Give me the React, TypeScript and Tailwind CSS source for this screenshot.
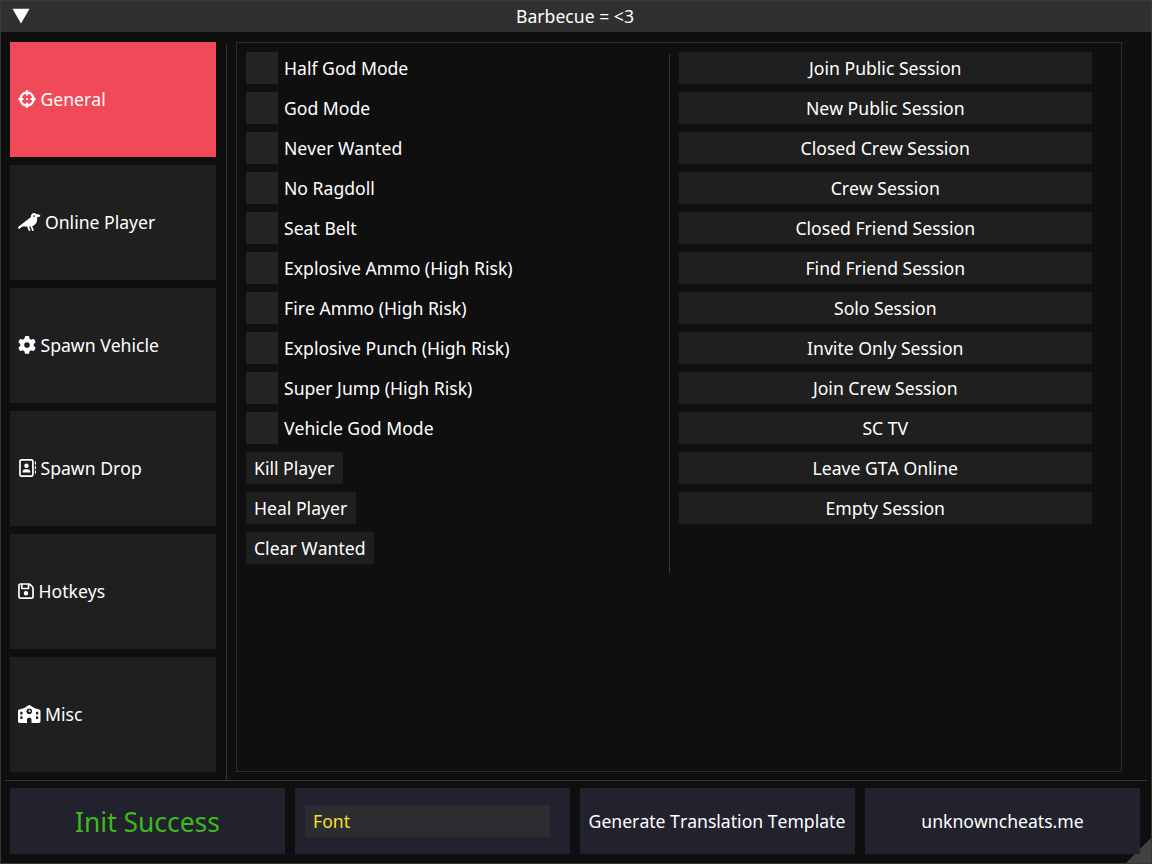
import type { ReactNode } from 'react';
import {
  FaCrosshairs,
  FaCrow,
  FaGear,
  FaRegAddressBook,
  FaRegFloppyDisk,
} from 'react-icons/fa6';

function SchoolIcon() {
  return (
    <svg
      className="h-[18px] w-[22.5px]"
      viewBox="0 0 640 512"
      fill="currentColor"
      fillRule="evenodd"
    >
      <path d="M302 5.400C313-1.800 327-1.800 338 5.400L474 92L605 129C626 135 640 154 640 176V464C640 490.500 618.500 512 592 512H384V416C384 380.700 355.300 352 320 352S256 380.700 256 416V512H48C21.500 512 0 490.500 0 464V176C0 154 14 135 35 129L166 92ZM80 192C71.200 192 64 199.200 64 208V256C64 264.800 71.200 272 80 272H112C120.800 272 128 264.800 128 256V208C128 199.200 120.800 192 112 192ZM528 192C519.200 192 512 199.200 512 208V256C512 264.800 519.200 272 528 272H560C568.800 272 576 264.800 576 256V208C576 199.200 568.800 192 560 192ZM80 320C71.200 320 64 327.200 64 336V384C64 392.800 71.200 400 80 400H112C120.800 400 128 392.800 128 384V336C128 327.200 120.800 320 112 320ZM528 320C519.200 320 512 327.200 512 336V384C512 392.800 519.200 400 528 400H560C568.800 400 576 392.800 576 384V336C576 327.200 568.800 320 560 320ZM320 96A80 80 0 1 0 320 256A80 80 0 1 0 320 96ZM320 128C328.800 128 336 135.200 336 144V160H352C360.800 160 368 167.200 368 176S360.800 192 352 192H320C311.200 192 304 184.800 304 176V144C304 135.200 311.200 128 320 128Z" />
    </svg>
  );
}

const tabs: { label: string; icon: ReactNode }[] = [
  { label: 'General', icon: <FaCrosshairs className="h-[18px] w-[18px]" /> },
  { label: 'Online Player', icon: <FaCrow className="h-[18px] w-[22.5px]" /> },
  { label: 'Spawn Vehicle', icon: <FaGear className="h-[18px] w-[18px]" /> },
  { label: 'Spawn Drop', icon: <FaRegAddressBook className="h-[18px] w-[18px]" /> },
  { label: 'Hotkeys', icon: <FaRegFloppyDisk className="h-[18px] w-[16px]" /> },
  { label: 'Misc', icon: <SchoolIcon /> },
];

const toggles = [
  'Half God Mode',
  'God Mode',
  'Never Wanted',
  'No Ragdoll',
  'Seat Belt',
  'Explosive Ammo (High Risk)',
  'Fire Ammo (High Risk)',
  'Explosive Punch (High Risk)',
  'Super Jump (High Risk)',
  'Vehicle God Mode',
];

const actions = ['Kill Player', 'Heal Player', 'Clear Wanted'];

const sessions = [
  'Join Public Session',
  'New Public Session',
  'Closed Crew Session',
  'Crew Session',
  'Closed Friend Session',
  'Find Friend Session',
  'Solo Session',
  'Invite Only Session',
  'Join Crew Session',
  'SC TV',
  'Leave GTA Online',
  'Empty Session',
];

export default function App() {
  return (
    <div className="relative flex h-[864px] w-[1152px] flex-col overflow-hidden bg-[#0f0f0f] font-['Noto_Sans',sans-serif] text-[17.6px] leading-6 whitespace-nowrap text-white [font-kerning:none]">
      <header className="flex h-8 shrink-0 items-center bg-[#303030] pl-3">
        <svg className="h-4 w-[18px] shrink-0" viewBox="0 0 18 16" fill="currentColor">
          <path d="M0.5 0.7H17.5L9 15.4Z" />
        </svg>
        <h1 className="flex-1 pr-8 pb-px text-center">Barbecue = &lt;3</h1>
      </header>

      <div className="flex h-[748px] shrink-0 pl-2.5">
        <nav className="flex w-[206px] flex-col gap-2 pt-2.5">
          {tabs.map((tab, i) => (
            <button
              key={tab.label}
              className={`flex h-[115px] shrink-0 items-center gap-[4.5px] pb-[2px] pl-2 ${i === 0 ? 'bg-[#f04a58]' : 'bg-[#1f1f1f]'}`}
            >
              {tab.icon}
              <span>{tab.label}</span>
            </button>
          ))}
        </nav>

        <div className="mt-3 ml-2.5 w-px bg-[#383838]" />

        <main className="mt-2.5 mb-2 ml-[9px] flex w-[886px] border border-[#2d2d2d] pt-[9px] pl-[9px]">
          <div className="flex w-[423px] flex-col items-start gap-2">
            {toggles.map((label) => (
              <label key={label} className="flex h-8 items-center gap-1.5">
                <span className="h-8 w-8 bg-[#242424]" />
                <span>{label}</span>
              </label>
            ))}
            {actions.map((label) => (
              <button key={label} className="h-8 bg-[#1f1f1f] pr-[8.4px] pl-2">
                {label}
              </button>
            ))}
          </div>
          <div className="mt-0.5 h-[519px] w-px bg-[#383838]" />
          <div className="ml-[9px] flex w-[413px] flex-col gap-2">
            {sessions.map((label) => (
              <button key={label} className="h-8 shrink-0 bg-[#1f1f1f] pr-[0.5px] text-center">
                {label}
              </button>
            ))}
          </div>
        </main>
      </div>

      <div className="mx-[5px] h-px shrink-0 bg-[#383838]" />

      <svg className="absolute right-px bottom-px h-[25px] w-[25px]" viewBox="0 0 25 25">
        <path d="M25 0V25H0Z" fill="#424242" />
      </svg>

      <footer className="relative mt-[7px] flex h-[66px] gap-2.5 pl-2.5">
        <div className="flex w-[275px] items-center justify-center bg-[#22222e] pt-0.5 text-[26.4px] leading-9 text-[#3db91a]">
          Init Success
        </div>
        <div className="flex w-[275px] items-center bg-[#22222e] pl-2.5">
          <div className="h-8 w-[245px] bg-[#2c2d31] px-2 pt-1 text-[#f8e030]">Font</div>
        </div>
        <button className="w-[275px] bg-[#22222e] pr-px">Generate Translation Template</button>
        <button className="w-[275px] bg-[#22222e]">unknowncheats.me</button>
      </footer>

      <div className="pointer-events-none absolute inset-0 border border-[#383838]" />
    </div>
  );
}
